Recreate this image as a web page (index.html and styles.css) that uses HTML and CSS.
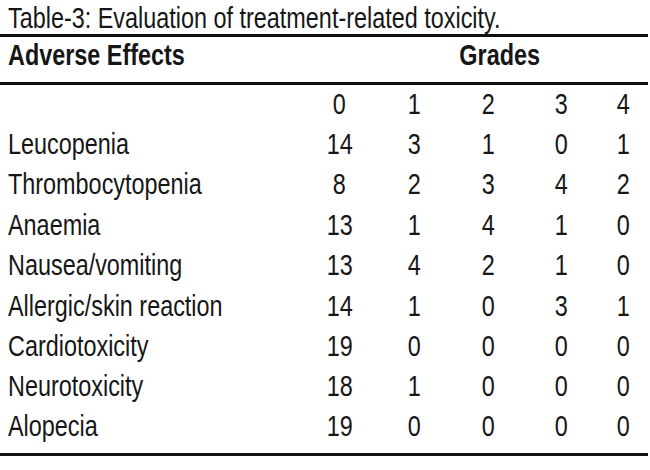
FILE: index.html
```html
<!DOCTYPE html>
<html lang="en">
<head>
<meta charset="utf-8">
<title>Table-3</title>
<link rel="stylesheet" href="styles.css">
</head>
<body>
<div class="page">
  <p class="caption"><span class="t">Table-3: Evaluation of treatment-related toxicity.</span></p>
  <table class="tox">
    <colgroup>
      <col class="c-effect">
      <col class="c-g0">
      <col class="c-g1">
      <col class="c-g2">
      <col class="c-g3">
      <col class="c-g4">
    </colgroup>
    <thead>
      <tr class="head">
        <th class="effect"><span class="t">Adverse Effects</span></th>
        <th class="grades" colspan="5"><span class="t">Grades</span></th>
      </tr>
    </thead>
    <tbody>
      <tr><td class="name"></td><td><span class="t">0</span></td><td><span class="t">1</span></td><td><span class="t">2</span></td><td><span class="t">3</span></td><td><span class="t">4</span></td></tr>
      <tr><td class="name"><span class="t">Leucopenia</span></td><td><span class="t">14</span></td><td><span class="t">3</span></td><td><span class="t">1</span></td><td><span class="t">0</span></td><td><span class="t">1</span></td></tr>
      <tr><td class="name"><span class="t">Thrombocytopenia</span></td><td><span class="t">8</span></td><td><span class="t">2</span></td><td><span class="t">3</span></td><td><span class="t">4</span></td><td><span class="t">2</span></td></tr>
      <tr><td class="name"><span class="t">Anaemia</span></td><td><span class="t">13</span></td><td><span class="t">1</span></td><td><span class="t">4</span></td><td><span class="t">1</span></td><td><span class="t">0</span></td></tr>
      <tr><td class="name"><span class="t">Nausea/vomiting</span></td><td><span class="t">13</span></td><td><span class="t">4</span></td><td><span class="t">2</span></td><td><span class="t">1</span></td><td><span class="t">0</span></td></tr>
      <tr><td class="name"><span class="t">Allergic/skin reaction</span></td><td><span class="t">14</span></td><td><span class="t">1</span></td><td><span class="t">0</span></td><td><span class="t">3</span></td><td><span class="t">1</span></td></tr>
      <tr><td class="name"><span class="t">Cardiotoxicity</span></td><td><span class="t">19</span></td><td><span class="t">0</span></td><td><span class="t">0</span></td><td><span class="t">0</span></td><td><span class="t">0</span></td></tr>
      <tr><td class="name"><span class="t">Neurotoxicity</span></td><td><span class="t">18</span></td><td><span class="t">1</span></td><td><span class="t">0</span></td><td><span class="t">0</span></td><td><span class="t">0</span></td></tr>
      <tr class="last"><td class="name"><span class="t">Alopecia</span></td><td><span class="t">19</span></td><td><span class="t">0</span></td><td><span class="t">0</span></td><td><span class="t">0</span></td><td><span class="t">0</span></td></tr>
    </tbody>
  </table>
</div>
</body>
</html>
```

FILE: styles.css
```css
html, body {
  margin: 0;
  padding: 0;
  background: #ffffff;
}

.page {
  width: 650px;
  font-family: "Liberation Sans", Arial, sans-serif;
  font-size: 30px;
  color: #161616;
}

/* condensed face: horizontally narrowed glyphs */
.t {
  display: inline-block;
  white-space: nowrap;
  transform: scaleX(0.78);
  transform-origin: center center;
}

.caption .t,
.effect .t,
.name .t {
  transform-origin: left center;
}

.caption {
  margin: 0;
  padding-left: 8px;
  height: 34px;
  line-height: 36px;
  white-space: nowrap;
}

.tox {
  width: 648px;
  border-collapse: collapse;
  table-layout: fixed;
  border-top: 3px solid #111;
  border-bottom: 3px solid #111;
}

.c-effect { width: 302px; }
.c-g0 { width: 75px; }
.c-g1 { width: 74px; }
.c-g2 { width: 74px; }
.c-g3 { width: 73px; }
.c-g4 { width: 50px; }

.tox th,
.tox td {
  padding: 0;
  font-weight: normal;
}

.head {
  height: 48px;
}

.head th {
  font-weight: bold;
  vertical-align: middle;
  padding-bottom: 9px;
  border-bottom: 3px solid #111;
  line-height: 34px;
}

.head .effect {
  text-align: left;
  padding-left: 8px;
}

.head .grades {
  text-align: center;
  padding-left: 50px;
}

.tox tbody tr {
  height: 40.4px;
}

.tox tbody td {
  text-align: center;
  vertical-align: middle;
  line-height: 34px;
}

.tox tbody td.name {
  text-align: left;
  padding-left: 8px;
}

.tox tbody tr.last {
  height: 48px;
}

.tox tbody tr.last td {
  padding-bottom: 8px;
}
```
